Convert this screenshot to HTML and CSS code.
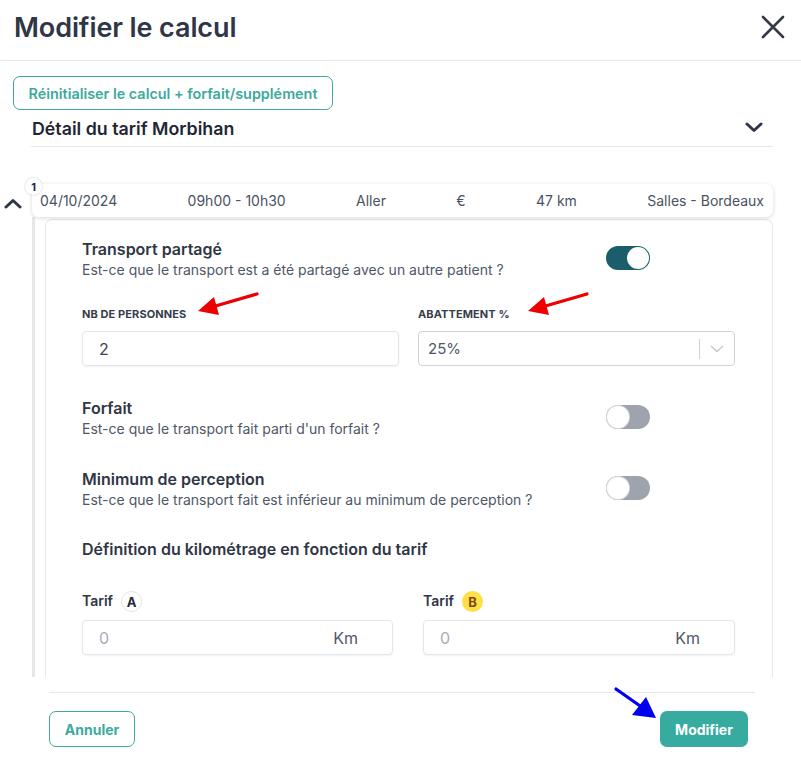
FILE: index.html
```html
<!DOCTYPE html>
<html lang="fr">
<head>
<meta charset="utf-8">
<title>Modifier le calcul</title>
<link rel="stylesheet" href="styles.css">
</head>
<body>
<div class="modal">
  <header class="modal-header">
    <h1 class="modal-title">Modifier le calcul</h1>
    <button class="close-btn" aria-label="Fermer">
      <svg width="24" height="24" viewBox="0 0 24 24"><path d="M2 2 L22 22 M22 2 L2 22" stroke="#333b48" stroke-width="2.6" stroke-linecap="round" fill="none"/></svg>
    </button>
  </header>

  <div class="modal-body">
    <button class="btn-outline reset-btn">Réinitialiser le calcul + forfait/supplément</button>

    <div class="section-head">
      <h2 class="section-title">Détail du tarif Morbihan</h2>
      <svg class="chev-down" width="18" height="11" viewBox="0 0 18 11"><path d="M2 2 L9 8.5 L16 2" stroke="#2d3748" stroke-width="3" stroke-linecap="round" stroke-linejoin="round" fill="none"/></svg>
    </div>

    <div class="trip">
      <div class="trip-toggle">
        <svg width="18" height="11" viewBox="0 0 18 11"><path d="M2 9 L9 2.5 L16 9" stroke="#2d3748" stroke-width="3" stroke-linecap="round" stroke-linejoin="round" fill="none"/></svg>
      </div>
      <div class="trip-main">
        <div class="trip-card">
          <span class="trip-num">1</span>
          <span>04/10/2024</span>
          <span>09h00 - 10h30</span>
          <span>Aller</span>
          <span>€</span>
          <span>47 km</span>
          <span>Salles - Bordeaux</span>
        </div>
        <div class="trip-detail">
          <div class="detail-card">
            <div class="opt-row">
              <div class="opt-text">
                <div class="opt-title">Transport partagé</div>
                <div class="opt-desc">Est-ce que le transport est a été partagé avec un autre patient ?</div>
              </div>
              <span class="switch on"><span class="knob"></span></span>
            </div>

            <div class="field-grid">
              <div class="field">
                <label class="field-label">NB DE PERSONNES</label>
                <div class="input"><span class="val">2</span></div>
              </div>
              <div class="field">
                <label class="field-label">ABATTEMENT %</label>
                <div class="select">
                  <span class="sel-val">25%</span>
                  <span class="sel-sep"></span>
                  <svg class="sel-chev" width="14" height="8" viewBox="0 0 14 8"><path d="M1.5 1.5 L7 6.5 L12.5 1.5" stroke="#c7c9cc" stroke-width="1.6" fill="none" stroke-linecap="round" stroke-linejoin="round"/></svg>
                </div>
              </div>
            </div>

            <div class="opt-row gap-forfait">
              <div class="opt-text">
                <div class="opt-title">Forfait</div>
                <div class="opt-desc">Est-ce que le transport fait parti d'un forfait ?</div>
              </div>
              <span class="switch"><span class="knob"></span></span>
            </div>

            <div class="opt-row gap-minimum">
              <div class="opt-text">
                <div class="opt-title">Minimum de perception</div>
                <div class="opt-desc">Est-ce que le transport fait est inférieur au minimum de perception ?</div>
              </div>
              <span class="switch"><span class="knob"></span></span>
            </div>

            <div class="opt-title km-title">Définition du kilométrage en fonction du tarif</div>

            <div class="tarif-grid">
              <div class="field">
                <div class="tarif-label">Tarif <span class="tarif-badge a">A</span></div>
                <div class="input km-input"><span class="ph">0</span><span class="unit">Km</span></div>
              </div>
              <div class="field">
                <div class="tarif-label">Tarif <span class="tarif-badge b">B</span></div>
                <div class="input km-input"><span class="ph">0</span><span class="unit">Km</span></div>
              </div>
            </div>
          </div>
        </div>
      </div>
    </div>
  </div>

  <footer class="modal-footer">
    <div class="footer-inner">
      <button class="btn-outline cancel-btn">Annuler</button>
      <button class="btn-primary">Modifier</button>
    </div>
  </footer>

  <svg class="annotations" width="801" height="765" viewBox="0 0 801 765">
    <line x1="257" y1="294" x2="212" y2="307" stroke="#ee0000" stroke-width="3.2" stroke-linecap="round"/>
    <polygon points="198,311 214,297 219,315" fill="#ee0000"/>
    <line x1="587" y1="294" x2="542" y2="307" stroke="#ee0000" stroke-width="3.2" stroke-linecap="round"/>
    <polygon points="528,311 544,297 549,315" fill="#ee0000"/>
    <line x1="616" y1="689" x2="643" y2="708" stroke="#0000ee" stroke-width="3.2" stroke-linecap="round"/>
    <polygon points="656,718 632,715 646,697" fill="#0000ee"/>
  </svg>
</div>
</body>
</html>
```

FILE: styles.css
```css
* { box-sizing: border-box; }

html, body {
  margin: 0;
  padding: 0;
  background: #ffffff;
}

body {
  font-family: Inter, "Noto Sans", "Liberation Sans", sans-serif;
  color: #2d3748;
}

.modal {
  position: relative;
  width: 801px;
  height: 765px;
  display: flex;
  flex-direction: column;
  overflow: hidden;
  background: #fff;
}

/* Header */
.modal-header {
  height: 61px;
  flex: none;
  display: flex;
  align-items: center;
  justify-content: space-between;
  padding: 0 16px 6px 14px;
  border-bottom: 1px solid #e6e7ea;
}

.modal-title {
  margin: 0;
  font-size: 27px;
  font-weight: 600;
  color: #2f3645;
  letter-spacing: -0.1px;
}

.close-btn {
  border: 0;
  background: none;
  padding: 0;
  width: 24px;
  height: 24px;
  display: flex;
  cursor: pointer;
}

/* Body */
.modal-body {
  height: 616px;
  flex: none;
  overflow: hidden;
  padding-top: 15px;
}

.btn-outline {
  font-family: inherit;
  font-size: 14px;
  font-weight: 600;
  color: #3ea99d;
  background: #fff;
  border: 1px solid #3ea99d;
  border-radius: 7px;
  cursor: pointer;
}

.reset-btn {
  display: block;
  margin-left: 13px;
  height: 34px;
  width: 320px;
  padding: 0 10px;
  font-size: 14.4px;
}

.section-head {
  margin: 0 28px 0 31px;
  height: 37px;
  display: flex;
  align-items: center;
  justify-content: space-between;
  border-bottom: 1px solid #e6e7ea;
  padding-right: 10px;
}

.section-title {
  margin: 0 0 0 1px;
  font-size: 17.8px;
  font-weight: 600;
  color: #1f2633;
}

.chev-down { display: block; margin-top: -1px; }

/* Trip */
.trip {
  display: flex;
  margin-top: 37px;
}

.trip-toggle {
  width: 32px;
  flex: none;
  padding: 14px 0 0 4px;
}
.trip-toggle svg { display: block; }

.trip-main {
  flex: none;
  width: 741px;
}

.trip-card {
  position: relative;
  height: 33px;
  display: flex;
  align-items: center;
  justify-content: space-between;
  padding: 0 9px 0 8px;
  border-radius: 7px;
  background: #fff;
  box-shadow: 0 1px 4px rgba(0, 0, 0, 0.16);
  font-size: 14px;
  color: #4a5262;
}

.trip-num {
  position: absolute;
  left: -7px;
  top: -6px;
  width: 17px;
  height: 17px;
  border-radius: 50%;
  background: #fff;
  box-shadow: 0 0 2px rgba(0, 0, 0, 0.25);
  font-size: 11px;
  font-weight: 700;
  color: #232a45;
  display: flex;
  align-items: center;
  justify-content: center;
}

.trip-detail {
  border-left: 3px solid #e6e7eb;
  padding: 2px 0 0 10px;
}

.detail-card {
  border: 1px solid #e6e7ea;
  border-bottom: 0;
  border-radius: 7px 7px 0 0;
  padding: 19px 37px 40px 36px;
}

.opt-row {
  width: 568px;
  display: flex;
  align-items: center;
  justify-content: space-between;
}

.opt-title {
  font-size: 16px;
  line-height: 20px;
  font-weight: 600;
  color: #2f3645;
}

.opt-desc {
  font-size: 14px;
  line-height: 21px;
  color: #4f5767;
}

.switch {
  position: relative;
  width: 44px;
  height: 24px;
  border-radius: 12px;
  background: #9ea3ad;
  flex: none;
  margin-top: -4px;
}

.switch .knob {
  position: absolute;
  top: 1px;
  left: 1px;
  width: 22px;
  height: 22px;
  border-radius: 50%;
  background: #fff;
  box-shadow: 0 0 0 1px #d5d8dd;
}

.switch.on { background: #1b5e6b; }
.switch.on .knob {
  left: 21px;
  box-shadow: none;
}

.field-grid {
  margin-top: 27px;
  display: grid;
  grid-template-columns: 317px 317px;
  column-gap: 19px;
}

.field-label {
  display: block;
  font-size: 11px;
  line-height: 14px;
  font-weight: 700;
  color: #363d4b;
  letter-spacing: 0.1px;
  margin-bottom: 10px;
}

.input {
  height: 35px;
  border: 1px solid #e3e6ea;
  border-radius: 4px;
  box-shadow: 0 1px 2px rgba(0, 0, 0, 0.05);
  display: flex;
  align-items: center;
  padding: 0 16px;
  font-size: 16px;
  color: #3b4250;
}

.select {
  height: 35px;
  border: 1px solid #cfd3d8;
  border-radius: 4px;
  display: flex;
  align-items: center;
  padding: 0 10px 0 9px;
  font-size: 15px;
  color: #4f5767;
}

.sel-val { flex: 1; }

.sel-sep {
  width: 1px;
  height: 20px;
  background: #cfd1d4;
  margin-right: 10px;
}

.sel-chev { display: block; }

.gap-forfait { margin-top: 32px; }
.gap-minimum { margin-top: 30px; }

.km-title { margin-top: 29px; }

.tarif-grid {
  margin-top: 31px;
  display: grid;
  grid-template-columns: 311px 312px;
  column-gap: 30px;
}

.tarif-label {
  display: flex;
  align-items: center;
  gap: 8px;
  height: 21px;
  font-size: 14px;
  font-weight: 600;
  color: #2f3645;
  margin-bottom: 9px;
}

.tarif-badge {
  width: 21px;
  height: 21px;
  border-radius: 50%;
  display: flex;
  align-items: center;
  justify-content: center;
  font-size: 13px;
  font-weight: 700;
  margin-top: 2px;
}

.tarif-badge.a {
  background: #fff;
  border: 1px solid #e2e4e8;
  color: #232a38;
}

.tarif-badge.b {
  background: #fde047;
  color: #7a4a08;
}

.km-input {
  justify-content: space-between;
  padding: 0 34px 0 16px;
  font-size: 16px;
}

.km-input .ph { color: #a7adb8; }
.km-input .unit { color: #4f5767; }

/* Footer */
.modal-footer {
  flex: 1;
  padding: 15px 46px 0 49px;
}

.footer-inner {
  border-top: 1px solid #e6e7ea;
  padding: 18px 7px 0 0;
  display: flex;
  justify-content: space-between;
  align-items: center;
}

.cancel-btn {
  height: 36px;
  width: 86px;
  padding: 0;
  font-weight: 700;
  border-width: 1.5px;
}

.btn-primary {
  font-family: inherit;
  height: 36px;
  width: 88px;
  border: 0;
  border-radius: 7px;
  background: #37ab9f;
  color: #fff;
  font-size: 14px;
  font-weight: 700;
  cursor: pointer;
}

/* Annotation overlay */
.annotations {
  position: absolute;
  left: 0;
  top: 0;
  pointer-events: none;
}
```
